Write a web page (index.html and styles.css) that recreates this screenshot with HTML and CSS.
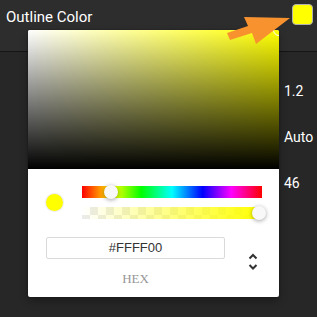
FILE: index.html
```html
<!DOCTYPE html>
<html lang="en">
<head>
  <meta charset="UTF-8" />
  <title>Outline Color</title>
  <link rel="stylesheet" href="styles.css">
</head>
<body>
  <div class="header">
    <span class="title">Outline Color</span>
    <span class="swatch"></span>
  </div>
  <div class="rows">
    <div class="row"><span class="value">1.2</span></div>
    <div class="row"><span class="value">Auto</span></div>
    <div class="row"><span class="value">46</span></div>
  </div>

  <div class="picker">
    <div class="saturation">
      <span class="sat-thumb"></span>
    </div>
    <div class="panel">
      <div class="controls">
        <span class="preview"></span>
        <div class="sliders">
          <div class="hue"><span class="thumb hue-thumb"></span></div>
          <div class="alpha"><div class="alpha-fill"></div><span class="thumb alpha-thumb"></span></div>
        </div>
      </div>
      <div class="fields">
        <div class="field">
          <div class="hex-input">#FFFF00</div>
          <div class="hex-label">HEX</div>
        </div>
        <svg class="toggle" width="10" height="18" viewBox="0 0 10 18">
          <path d="M1.5 5.5 L5 2 L8.5 5.5" fill="none" stroke="#333" stroke-width="2"/>
          <path d="M1.5 12 L5 15.5 L8.5 12" fill="none" stroke="#333" stroke-width="2"/>
        </svg>
      </div>
    </div>
  </div>

  <svg class="arrow" width="317" height="60" viewBox="0 0 317 60">
    <polygon points="227,33 248,26 244,17 290,18 256,44 252,33 230,40" fill="#f7922f"/>
  </svg>
</body>
</html>
```

FILE: styles.css
```css
body {
  margin: 0;
  background-color: #272727;
  font-family: Roboto, 'Liberation Sans', sans-serif;
  width: 317px;
  height: 317px;
  overflow: hidden;
  position: relative;
}
.header {
  height: 51px;
  background-color: #2d2d2d;
  border-bottom: 1px solid #151515;
  display: flex;
  justify-content: space-between;
  align-items: flex-start;
}
.title {
  color: #fff;
  font-size: 15px;
  margin: 8px 0 0 6px;
}
.swatch {
  width: 19px;
  height: 19px;
  margin: 4px 4px 0 0;
  background: #ffff00;
  border: 1px solid #b0b0b0;
  border-radius: 4px;
}
.rows {
  padding-top: 16px;
}
.row {
  height: 46px;
  display: flex;
  align-items: center;
  justify-content: flex-end;
}
.value {
  width: 33px;
  color: #fff;
  font-size: 14px;
}
.picker {
  position: absolute;
  top: 30px;
  left: 28px;
  width: 251px;
  height: 267px;
  background: #fff;
  border-radius: 2px;
  overflow: hidden;
  box-shadow: 0 0 2px rgba(0,0,0,0.3), 0 4px 8px rgba(0,0,0,0.3);
}
.saturation {
  position: relative;
  height: 139px;
  background: linear-gradient(to top, #000, rgba(0,0,0,0)), linear-gradient(to right, #fff, #ffff00);
}
.sat-thumb {
  position: absolute;
  top: -6px;
  right: -6px;
  width: 10px;
  height: 10px;
  border: 1.5px solid #fff;
  border-radius: 50%;
}
.panel {
  padding-top: 17px;
}
.controls {
  display: flex;
  align-items: center;
}
.preview {
  width: 17px;
  height: 17px;
  margin-left: 18px;
  margin-right: 19px;
  border-radius: 50%;
  background: #ffff00;
  box-shadow: 0 0 0 1px rgba(0,0,0,0.08);
}
.sliders {
  width: 180px;
  display: flex;
  flex-direction: column;
  gap: 9px;
}
.hue, .alpha {
  position: relative;
  height: 12px;
}
.hue {
  background: linear-gradient(to right, #f00, #ff0 17%, #0f0 33%, #0ff 50%, #00f 67%, #f0f 83%, #f00);
}
.alpha {
  background-color: #fff;
  background-image:
    linear-gradient(45deg, #ebebeb 25%, transparent 25%, transparent 75%, #ebebeb 75%),
    linear-gradient(45deg, #ebebeb 25%, transparent 25%, transparent 75%, #ebebeb 75%);
  background-size: 16px 16px;
  background-position: 0 0, 8px 8px;
}
.alpha-fill {
  height: 100%;
  background: linear-gradient(to right, rgba(255,255,0,0), #ffff00);
}
.thumb {
  position: absolute;
  top: -1px;
  width: 14px;
  height: 14px;
  border-radius: 50%;
  background: #f8f8f8;
  box-shadow: 0 1px 4px rgba(0,0,0,0.37);
}
.hue-thumb {
  left: 22px;
}
.alpha-thumb {
  left: 170px;
}
.fields {
  display: flex;
  align-items: flex-start;
  margin-top: 18px;
}
.field {
  margin-left: 18px;
  width: 179px;
}
.hex-input {
  height: 20px;
  border: 1px solid #dadada;
  border-radius: 2px;
  font-family: 'Liberation Sans', Arial, sans-serif;
  font-size: 13px;
  color: #333;
  text-align: center;
  line-height: 20px;
}
.hex-label {
  margin-top: 12px;
  font-family: 'Liberation Serif', serif;
  font-size: 13px;
  color: #969696;
  text-align: center;
}
.toggle {
  margin: 16px 0 0 23px;
}
.arrow {
  position: absolute;
  top: 0;
  left: 0;
}
```
